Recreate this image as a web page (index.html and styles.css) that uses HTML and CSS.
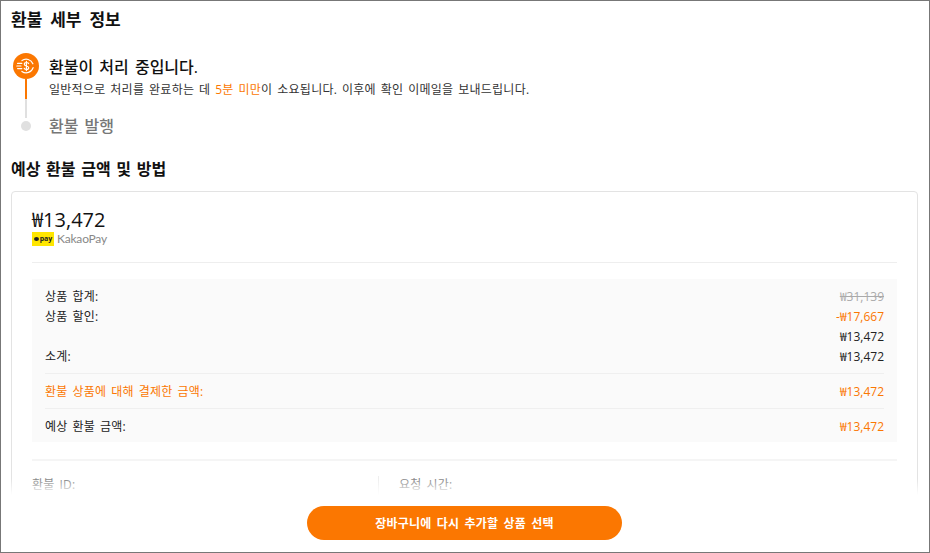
FILE: index.html
```html
<!DOCTYPE html>
<html lang="ko">
<head>
  <meta charset="UTF-8" />
  <title>환불 세부 정보</title>
  <link rel="stylesheet" href="styles.css">
</head>
<body>
  <div id="window">
    <div id="content">
      <h1 class="page-title">환불 세부 정보</h1>

      <div class="steps">
        <div class="step">
          <div class="step-rail">
            <svg class="step-icon" viewBox="0 0 26 26" width="26" height="26">
              <circle cx="13" cy="13" r="13" fill="#fb7701"/>
              <g fill="none" stroke="#fff" stroke-width="1.2" stroke-linecap="round">
                <path d="M9 7.6a7.2 7.2 0 0 1 10.9 3.2"/>
                <path d="M20.1 14.6a7.2 7.2 0 0 1-11.2 3.8"/>
                <path d="M4.6 10.4h4.2M3.8 13h4.2M4.6 15.6h4.2"/>
                <path d="M15.6 10.6c-.4-.8-1.3-1.1-2.2-1.1-1.2 0-2.1.6-2.1 1.7 0 2.4 4.4 1.2 4.4 3.6 0 1.1-1 1.7-2.2 1.7-1 0-1.9-.4-2.3-1.2M13.4 8.4v9.2"/>
              </g>
            </svg>
            <div class="step-line"></div>
          </div>
          <div class="step-body">
            <div class="step-title">환불이 처리 중입니다.</div>
            <div class="step-desc">일반적으로 처리를 완료하는 데 <span class="orange">5분 미만</span>이 소요됩니다. 이후에 확인 이메일을 보내드립니다.</div>
          </div>
        </div>
        <div class="step step-next">
          <div class="step-rail"><div class="step-dot"></div></div>
          <div class="step-title muted">환불 발행</div>
        </div>
      </div>

      <h2 class="section-title">예상 환불 금액 및 방법</h2>

      <div class="card">
        <div class="amount">₩13,472</div>
        <div class="method">
          <span class="pay-badge"><i class="pay-dot"></i>pay</span>
          <span class="method-name">KakaoPay</span>
        </div>
        <div class="divider"></div>

        <div class="summary">
          <div class="row"><span class="label">상품 합계:</span><span class="old-price">₩31,139</span></div>
          <div class="row"><span class="label">상품 할인:</span><span class="orange">-₩17,667</span></div>
          <div class="row"><span></span><span>₩13,472</span></div>
          <div class="row"><span class="label">소계:</span><span>₩13,472</span></div>
          <div class="row row-split orange"><span class="label">환불 상품에 대해 결제한 금액:</span><span>₩13,472</span></div>
          <div class="row row-split"><span class="label">예상 환불 금액:</span><span class="orange">₩13,472</span></div>
        </div>

        <div class="divider divider-lower"></div>

        <div class="meta">
          <div class="meta-cell label">환불 ID:</div>
          <div class="meta-cell meta-right label">요청 시간:</div>
        </div>
      </div>
      <div class="fade"></div>
    </div>

    <div id="footer">
      <button class="cta">장바구니에 다시 추가할 상품 선택</button>
    </div>
  </div>
</body>
</html>
```

FILE: styles.css
```css
* {
  box-sizing: border-box;
}

body {
  margin: 0;
  background: #fff;
  color: #222;
  font-family: "Open Sans", "Noto Sans CJK KR", sans-serif;
}

#window {
  width: 930px;
  height: 553px;
  border: 1px solid #777;
  display: flex;
  flex-direction: column;
  overflow: hidden;
}

#content {
  position: relative;
  height: 494px;
  padding: 0 11px 0 10px;
  overflow: hidden;
}

.page-title {
  margin: 8px 0 0;
  font-size: 17px;
  line-height: 22px;
  font-weight: 700;
  word-spacing: 3.5px;
  color: #111;
}

.steps {
  margin-top: 22px;
}

.step {
  display: flex;
  gap: 10px;
}

.step-rail {
  width: 28px;
  padding-left: 2px;
  display: flex;
  flex-direction: column;
  align-items: center;
  flex-shrink: 0;
}

.step-icon {
  display: block;
}

.step-line {
  width: 2px;
  height: 39px;
  background: linear-gradient(#fb7701 0 20px, #e0e0e0 20px);
}

.step-body {
  padding-top: 3px;
}

.step-title {
  font-size: 16px;
  line-height: 22px;
  font-weight: 500;
  word-spacing: 2px;
  color: #111;
}

.step-title.muted {
  margin-top: 1px;
  color: #777;
}

.step-desc {
  margin-top: 3px;
  font-size: 12px;
  line-height: 18px;
  letter-spacing: 0.25px;
  word-spacing: 1.5px;
  color: #333;
}

.step-next {
  margin-top: -4px;
}

.step-next .step-rail {
  padding-top: 7px;
}

.step-dot {
  width: 10px;
  height: 10px;
  border-radius: 50%;
  background: #e0e0e0;
}

.orange {
  color: #fb7701;
}

.section-title {
  margin: 21px 0 0;
  font-size: 16px;
  line-height: 22px;
  font-weight: 700;
  word-spacing: 1.5px;
  color: #111;
}

.card {
  margin-top: 11px;
  padding: 16px 20px 0;
  border: 1px solid #e3e3e3;
  border-radius: 4px;
  height: 340px;
}

.amount {
  font-size: 20px;
  line-height: 24px;
  color: #111;
}

.method {
  display: flex;
  align-items: center;
  gap: 3px;
  height: 14px;
}

.pay-badge {
  display: flex;
  align-items: center;
  justify-content: center;
  gap: 1px;
  width: 22px;
  height: 14px;
  background: #ffe600;
  color: #222;
  font-size: 7px;
  font-weight: 700;
  line-height: 14px;
}

.pay-dot {
  width: 5px;
  height: 4px;
  border-radius: 50%;
  background: #222;
}

.method-name {
  font-family: Lato, sans-serif;
  font-size: 12px;
  line-height: 14px;
  letter-spacing: -0.2px;
  color: #888;
}

.divider {
  height: 1px;
  margin-top: 16px;
  background: #eee;
}

.summary {
  margin-top: 16px;
  padding: 8px 13px 5px;
  background: #fafafa;
  font-size: 12px;
  color: #222;
}

.label {
  letter-spacing: 0.2px;
  word-spacing: 1.7px;
}

.row {
  display: flex;
  justify-content: space-between;
  min-height: 20px;
  line-height: 19px;
}

.row-split {
  margin-top: 6px;
  padding-top: 8px;
  min-height: 29px;
  border-top: 1px solid #efefef;
}

.old-price {
  color: #aaa;
  text-decoration: line-through;
}

.divider-lower {
  margin-top: 17px;
  height: 2px;
  background: #f5f5f5;
}

.meta {
  display: flex;
  margin-top: 15px;
  font-size: 12px;
  line-height: 18px;
  color: #888;
}

.meta-cell {
  width: 346px;
}

.meta-right {
  padding-left: 20px;
  border-left: 1px solid #eee;
  width: auto;
  height: 40px;
}

.fade {
  position: absolute;
  left: 0;
  right: 0;
  bottom: 0;
  height: 16px;
  background: linear-gradient(rgba(255, 255, 255, 0), #fff);
}

#footer {
  flex: 1;
  display: flex;
  justify-content: center;
  align-items: flex-start;
  padding-top: 11px;
  padding-right: 1px;
}

.cta {
  width: 315px;
  height: 34px;
  border: none;
  border-radius: 17px;
  background: #fb7701;
  color: #fff;
  font-family: inherit;
  font-size: 12px;
  font-weight: 700;
  letter-spacing: 0.2px;
  word-spacing: 2px;
}
```
